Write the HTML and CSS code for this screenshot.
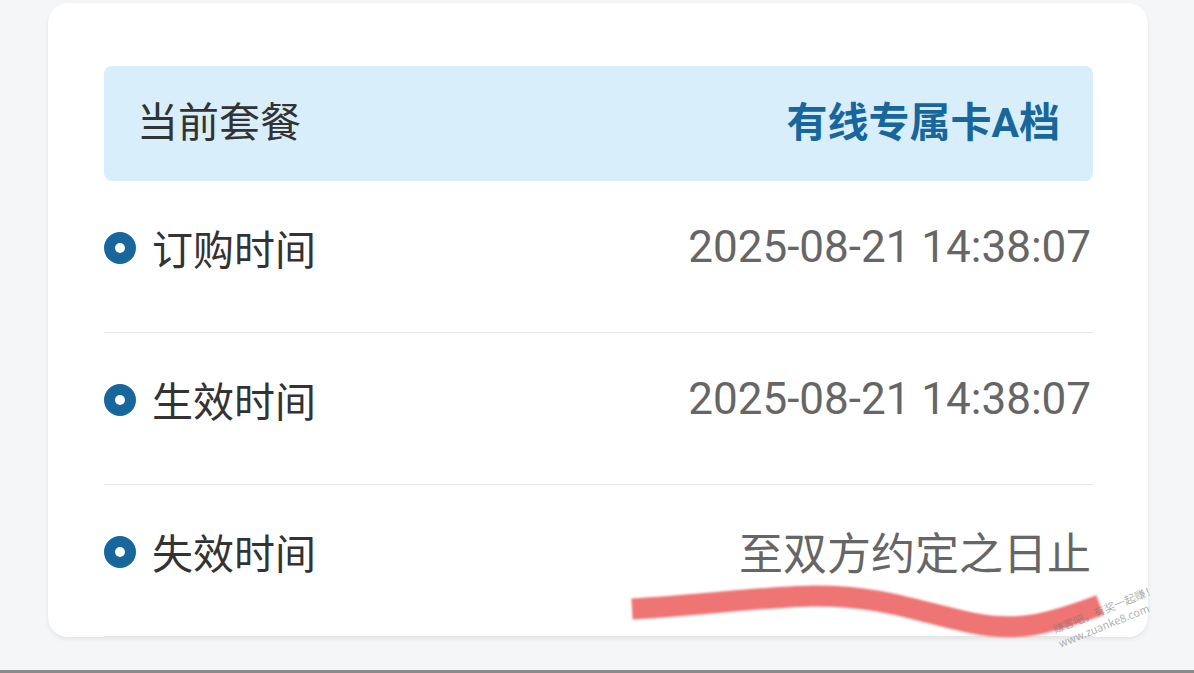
FILE: index.html
```html
<!DOCTYPE html>
<html>
<head>
  <meta charset="UTF-8">
  <title>套餐信息</title>
  <link rel="stylesheet" href="styles.css">
</head>
<body>
  <div class="page">
    <div class="card">
      <div class="plan">
        <span class="plan-label">当前套餐</span>
        <span class="plan-name">有线专属卡A档</span>
      </div>

      <div class="row">
        <span class="label"><i class="dot"></i>订购时间</span>
        <span class="value">2025-08-21 14:38:07</span>
      </div>
      <div class="row">
        <span class="label"><i class="dot"></i>生效时间</span>
        <span class="value">2025-08-21 14:38:07</span>
      </div>
      <div class="row">
        <span class="label"><i class="dot"></i>失效时间</span>
        <span class="value">至双方约定之日止</span>
      </div>

      <svg class="scribble" width="520" height="90" viewBox="0 0 520 90">
        <path d="M10 46 C 80 42, 140 34, 190 33 C 260 32, 300 50, 350 60 C 395 69, 425 62, 478 42" fill="none" stroke="#ef7474" stroke-width="21"/>
      </svg>
      <div class="watermark">赚客吧，有奖一起赚！<br>www.zuanke8.com</div>
    </div>
  </div>
  <div class="bottom-line"></div>
</body>
</html>
```

FILE: styles.css
```css
html, body {
  margin: 0;
  height: 100%;
}

body {
  background: #f5f6f8;
  font-family: Roboto, "Noto Sans CJK SC", sans-serif;
  overflow: hidden;
  position: relative;
}

.page {
  padding: 3px 46px 0 48px;
}

.card {
  position: relative;
  background: #fff;
  border-radius: 20px;
  padding: 63px 55px 0 56px;
  box-shadow: 0 2px 4px rgba(0,0,0,0.08);
  height: 571px;
}

.plan {
  display: flex;
  justify-content: space-between;
  align-items: center;
  background: #d9eefb;
  border-radius: 8px;
  height: 115px;
  box-sizing: border-box;
  padding: 0 33px 10px 33px;
  font-size: 41px;
}

.plan-label {
  color: #333;
}

.plan-name {
  color: #17669c;
  font-weight: bold;
}

.row {
  display: flex;
  justify-content: space-between;
  align-items: center;
  height: 152px;
  box-sizing: border-box;
  padding-bottom: 19px;
  border-bottom: 1px solid #e6e6e6;
}

.row:last-of-type {
  border-bottom: none;
}

.label {
  display: flex;
  align-items: center;
  font-size: 41px;
  color: #333;
}

.dot {
  box-sizing: content-box;
  width: 10px;
  height: 10px;
  border: 11px solid #17669c;
  border-radius: 50%;
  margin-right: 16px;
  margin-top: 2px;
}

.value {
  font-size: 44px;
  color: #666;
  padding-right: 2px;
}

.scribble {
  position: absolute;
  left: 574px;
  top: 560px;
  filter: blur(1.2px);
}

.watermark {
  position: absolute;
  left: 1004px;
  top: 598px;
  font-size: 11px;
  line-height: 15px;
  white-space: nowrap;
  color: rgba(120,120,120,0.6);
  transform: rotate(-22deg);
  font-family: "Noto Sans CJK SC", sans-serif;
}

.bottom-line {
  position: absolute;
  left: 0;
  right: 0;
  bottom: 0;
  height: 3px;
  background: #8a8a8a;
}
```
